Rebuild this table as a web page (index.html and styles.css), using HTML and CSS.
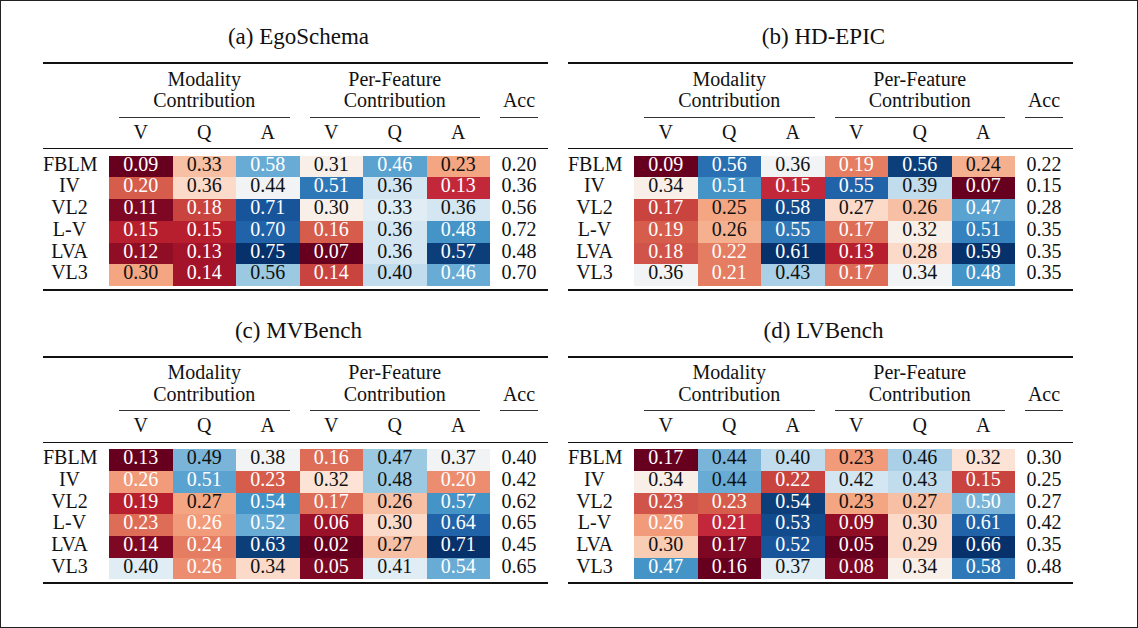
FILE: index.html
```html
<!DOCTYPE html>
<html>
<head>
<meta charset="utf-8">
<link rel="stylesheet" href="styles.css">
</head>
<body>
<div class="frame">
  <div class="grid">

    <section class="sub">
      <h2 class="title">(a) EgoSchema</h2>
      <div class="tbl">
        <div class="thead">
          <div class="corner"></div>
          <div class="grp g1">Modality<br>Contribution</div>
          <div class="grp g2">Per-Feature<br>Contribution</div>
          <div class="acch">Acc</div>
          <div class="ch">V</div><div class="ch">Q</div><div class="ch">A</div>
          <div class="ch">V</div><div class="ch">Q</div><div class="ch">A</div>
        </div>
        <div class="tbody">
          <div class="lab">FBLM</div><div class="r9 w">0.09</div><div class="r0">0.33</div><div class="b3 w">0.58</div><div class="p1">0.31</div><div class="b35 w">0.46</div><div class="r1">0.23</div><div class="acc">0.20</div>
          <div class="lab">IV</div><div class="r3 w">0.20</div><div class="p2">0.36</div><div class="n">0.44</div><div class="b5 w">0.51</div><div class="b0">0.36</div><div class="r45 w">0.13</div><div class="acc">0.36</div>
          <div class="lab">VL2</div><div class="r8 w">0.11</div><div class="r4 w">0.18</div><div class="b7 w">0.71</div><div class="p1">0.30</div><div class="q1">0.33</div><div class="b0">0.36</div><div class="acc">0.56</div>
          <div class="lab">L-V</div><div class="r5 w">0.15</div><div class="r5 w">0.15</div><div class="b6 w">0.70</div><div class="r3 w">0.16</div><div class="b0">0.36</div><div class="b4 w">0.48</div><div class="acc">0.72</div>
          <div class="lab">LVA</div><div class="r7 w">0.12</div><div class="r6 w">0.13</div><div class="b9 w">0.75</div><div class="r9 w">0.07</div><div class="b0">0.36</div><div class="b8 w">0.57</div><div class="acc">0.48</div>
          <div class="lab">VL3</div><div class="r1">0.30</div><div class="r6 w">0.14</div><div class="b2">0.56</div><div class="r4 w">0.14</div><div class="b1">0.40</div><div class="b3 w">0.46</div><div class="acc">0.70</div>
        </div>
      </div>
    </section>

    <section class="sub">
      <h2 class="title">(b) HD-EPIC</h2>
      <div class="tbl">
        <div class="thead">
          <div class="corner"></div>
          <div class="grp g1">Modality<br>Contribution</div>
          <div class="grp g2">Per-Feature<br>Contribution</div>
          <div class="acch">Acc</div>
          <div class="ch">V</div><div class="ch">Q</div><div class="ch">A</div>
          <div class="ch">V</div><div class="ch">Q</div><div class="ch">A</div>
        </div>
        <div class="tbody">
          <div class="lab">FBLM</div><div class="r9 w">0.09</div><div class="b55 w">0.56</div><div class="n">0.36</div><div class="r2 w">0.19</div><div class="b8 w">0.56</div><div class="r05">0.24</div><div class="acc">0.22</div>
          <div class="lab">IV</div><div class="p1">0.34</div><div class="b4 w">0.51</div><div class="r45 w">0.15</div><div class="b6 w">0.55</div><div class="b1">0.39</div><div class="r9 w">0.07</div><div class="acc">0.15</div>
          <div class="lab">VL2</div><div class="r4 w">0.17</div><div class="r1">0.25</div><div class="b75 w">0.58</div><div class="p2">0.27</div><div class="r0">0.26</div><div class="b35 w">0.47</div><div class="acc">0.28</div>
          <div class="lab">L-V</div><div class="r3 w">0.19</div><div class="r05">0.26</div><div class="b5 w">0.55</div><div class="r25 w">0.17</div><div class="p1">0.32</div><div class="b45 w">0.51</div><div class="acc">0.35</div>
          <div class="lab">LVA</div><div class="r35 w">0.18</div><div class="r2 w">0.22</div><div class="b9 w">0.61</div><div class="r5 w">0.13</div><div class="p2">0.28</div><div class="b9 w">0.59</div><div class="acc">0.35</div>
          <div class="lab">VL3</div><div class="n">0.36</div><div class="r2 w">0.21</div><div class="b15">0.43</div><div class="r25 w">0.17</div><div class="n">0.34</div><div class="b4 w">0.48</div><div class="acc">0.35</div>
        </div>
      </div>
    </section>

    <section class="sub">
      <h2 class="title">(c) MVBench</h2>
      <div class="tbl">
        <div class="thead">
          <div class="corner"></div>
          <div class="grp g1">Modality<br>Contribution</div>
          <div class="grp g2">Per-Feature<br>Contribution</div>
          <div class="acch">Acc</div>
          <div class="ch">V</div><div class="ch">Q</div><div class="ch">A</div>
          <div class="ch">V</div><div class="ch">Q</div><div class="ch">A</div>
        </div>
        <div class="tbody">
          <div class="lab">FBLM</div><div class="r9 w">0.13</div><div class="b25">0.49</div><div class="n">0.38</div><div class="r25 w">0.16</div><div class="b2">0.47</div><div class="n">0.37</div><div class="acc">0.40</div>
          <div class="lab">IV</div><div class="r12 w">0.26</div><div class="b35 w">0.51</div><div class="r3 w">0.23</div><div class="p15">0.32</div><div class="b2">0.48</div><div class="r15 w">0.20</div><div class="acc">0.42</div>
          <div class="lab">VL2</div><div class="r5 w">0.19</div><div class="r1">0.27</div><div class="b4 w">0.54</div><div class="r25 w">0.17</div><div class="r0">0.26</div><div class="b4 w">0.57</div><div class="acc">0.62</div>
          <div class="lab">L-V</div><div class="r25 w">0.23</div><div class="r12 w">0.26</div><div class="b3 w">0.52</div><div class="r65 w">0.06</div><div class="p2">0.30</div><div class="b6 w">0.64</div><div class="acc">0.65</div>
          <div class="lab">LVA</div><div class="r8 w">0.14</div><div class="r2 w">0.24</div><div class="b8 w">0.63</div><div class="r9 w">0.02</div><div class="r0">0.27</div><div class="b9 w">0.71</div><div class="acc">0.45</div>
          <div class="lab">VL3</div><div class="q1">0.40</div><div class="r15 w">0.26</div><div class="p2">0.34</div><div class="r8 w">0.05</div><div class="q1">0.41</div><div class="b3 w">0.54</div><div class="acc">0.65</div>
        </div>
      </div>
    </section>

    <section class="sub">
      <h2 class="title">(d) LVBench</h2>
      <div class="tbl">
        <div class="thead">
          <div class="corner"></div>
          <div class="grp g1">Modality<br>Contribution</div>
          <div class="grp g2">Per-Feature<br>Contribution</div>
          <div class="acch">Acc</div>
          <div class="ch">V</div><div class="ch">Q</div><div class="ch">A</div>
          <div class="ch">V</div><div class="ch">Q</div><div class="ch">A</div>
        </div>
        <div class="tbody">
          <div class="lab">FBLM</div><div class="r9 w">0.17</div><div class="b25">0.44</div><div class="b1">0.40</div><div class="r12">0.23</div><div class="b15">0.46</div><div class="p15">0.32</div><div class="acc">0.30</div>
          <div class="lab">IV</div><div class="p1">0.34</div><div class="b3">0.44</div><div class="r4 w">0.22</div><div class="b0">0.42</div><div class="b1">0.43</div><div class="r4 w">0.15</div><div class="acc">0.25</div>
          <div class="lab">VL2</div><div class="r35 w">0.23</div><div class="r3 w">0.23</div><div class="b8 w">0.54</div><div class="r1">0.23</div><div class="r0">0.27</div><div class="b25 w">0.50</div><div class="acc">0.27</div>
          <div class="lab">L-V</div><div class="r12 w">0.26</div><div class="r45 w">0.21</div><div class="b75 w">0.53</div><div class="r7 w">0.09</div><div class="p2">0.30</div><div class="b6 w">0.61</div><div class="acc">0.42</div>
          <div class="lab">LVA</div><div class="r0b">0.30</div><div class="r8 w">0.17</div><div class="b7 w">0.52</div><div class="r9 w">0.05</div><div class="p2">0.29</div><div class="b9 w">0.66</div><div class="acc">0.35</div>
          <div class="lab">VL3</div><div class="b4 w">0.47</div><div class="r9 w">0.16</div><div class="q1">0.37</div><div class="r8 w">0.08</div><div class="p1">0.34</div><div class="b5 w">0.58</div><div class="acc">0.48</div>
        </div>
      </div>
    </section>

  </div>
</div>
</body>
</html>
```

FILE: styles.css
```css
body {
  margin: 0;
  background: #fff;
}

.frame {
  width: 1138px;
  height: 628px;
  box-sizing: border-box;
  border: 1px solid #222;
  font-family: "Liberation Serif", "Times New Roman", serif;
  color: #111;
  overflow: hidden;
}

.grid {
  display: grid;
  grid-template-columns: 505px 505px;
  column-gap: 20px;
  grid-auto-rows: 293.5px;
  padding: 22.2px 0 0 42px;
}

.title {
  margin: 0 0 11.1px;
  padding-left: 6px;
  font-size: 23px;
  line-height: 28px;
  font-weight: normal;
  text-align: center;
}

.tbl {
  border-top: 2px solid #111;
  font-size: 20px;
}

.thead,
.tbody {
  display: grid;
  grid-template-columns: 66px repeat(6, 63.5px) 58px;
}

.thead {
  padding: 4.5px 0 5.1px;
  border-bottom: 1px solid #111;
  line-height: 21.7px;
}

.corner {
  grid-row: span 2;
}

.grp,
.acch {
  margin: 0 10px;
  padding-bottom: 4.8px;
  border-bottom: 1px solid #333;
  text-align: center;
}

.g1,
.g2 {
  grid-column: span 3;
}

.acch {
  align-self: end;
}

.ch {
  margin-top: 3.7px;
  text-align: center;
}

.tbody {
  margin-top: 6.2px;
  padding-bottom: 3px;
  border-bottom: 2px solid #111;
  grid-auto-rows: 21.72px;
  line-height: 16.5px;
}

.tbody > div {
  text-align: center;
}

.tbody > .lab {
  padding-right: 13px;
}

.w { color: #fff; }

/* RdBu-like heat colours */
.r9 { background: #67001f; }
.r8 { background: #7e0823; }
.r7 { background: #900d26; }
.r65 { background: #9a1129; }
.r6 { background: #a31329; }
.r5 { background: #b81f2e; }
.r45 { background: #c2283a; }
.r4 { background: #c9433f; }
.r35 { background: #d1544a; }
.r3 { background: #d65c4b; }
.r25 { background: #de6d57; }
.r2 { background: #e57d63; }
.r15 { background: #ec8d70; }
.r12 { background: #f19b7b; }
.r1 { background: #f4a683; }
.r05 { background: #f5b090; }
.r0 { background: #f7bfa4; }
.r0b { background: #f9ccb4; }
.p2 { background: #fbdaca; }
.p15 { background: #fce3d5; }
.p1 { background: #f9efe9; }
.n  { background: #f2f3f4; }
.q1 { background: #e1edf4; }
.b0 { background: #d3e6f1; }
.b1 { background: #c1dcec; }
.b15 { background: #a9d0e6; }
.b2 { background: #9bc9e1; }
.b25 { background: #7ab5d9; }
.b3 { background: #68abd4; }
.b35 { background: #5aa2cf; }
.b4 { background: #4594c7; }
.b45 { background: #3582be; }
.b5 { background: #2f78b7; }
.b55 { background: #2a6fb2; }
.b6 { background: #2163a8; }
.b7 { background: #17549a; }
.b75 { background: #124b8b; }
.b8 { background: #0c3f7a; }
.b9 { background: #07316a; }
```
